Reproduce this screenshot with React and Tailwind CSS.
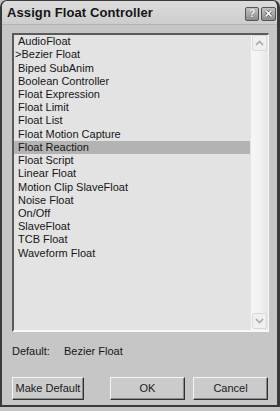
import React from "react";

const items = [
  "AudioFloat",
  "Bezier Float",
  "Biped SubAnim",
  "Boolean Controller",
  "Float Expression",
  "Float Limit",
  "Float List",
  "Float Motion Capture",
  "Float Reaction",
  "Float Script",
  "Linear Float",
  "Motion Clip SlaveFloat",
  "Noise Float",
  "On/Off",
  "SlaveFloat",
  "TCB Float",
  "Waveform Float",
];

function Btn({ children, className }) {
  return (
    <div
      className={
        "h-[23px] flex items-center justify-center whitespace-nowrap bg-[#cbcbcb] border border-t-[#f4f4f4] border-l-[#f4f4f4] border-r-[#303030] border-b-[#303030] shadow-[inset_-1px_-1px_0_#8a8a8a] text-[11px] text-[#1a1a1a] " +
        className
      }
    >
      {children}
    </div>
  );
}

function Chevron({ up }) {
  return (
    <svg width="9" height="6" viewBox="0 0 9 6">
      <path
        d={up ? "M1 5 L4.5 1.5 L8 5" : "M1 1 L4.5 4.5 L8 1"}
        fill="none"
        stroke="#a8a8a8"
        strokeWidth="1.6"
      />
    </svg>
  );
}

export default function App() {
  return (
    <div
      className="w-[280px] h-[411px] bg-[#c4c4c4] overflow-hidden"
      style={{ fontFamily: '"Liberation Sans", Arial, sans-serif' }}
    >
      <div className="w-[280px] h-[407px] flex flex-col bg-[#c6c6c6] border-t border-l-2 border-r-[3px] border-b-2 border-[#3a3a3a] rounded-t-[7px] overflow-hidden">
        {/* title bar */}
        <div className="h-[24px] shrink-0 flex items-center pl-[5px] pr-[1px] bg-gradient-to-b from-[#dcdcdc] to-[#cdcdcd] border-b border-[#b4b4b4]">
          <div className="text-[13px] font-bold text-[#151515] tracking-[0.1px] mt-[1px]">
            Assign Float Controller
          </div>
          <div className="ml-auto flex gap-[2px] mt-[2px]">
            <div className="w-[14px] h-[14px] rounded-[2px] border border-[#555] bg-gradient-to-b from-[#c4c4c4] to-[#8c8c8c] flex items-center justify-center text-white text-[11px] font-bold leading-none [text-shadow:0_0_1px_#333]">
              ?
            </div>
            <div className="w-[15px] h-[14px] rounded-[2px] border border-[#555] bg-gradient-to-b from-[#c4c4c4] to-[#8c8c8c] flex items-center justify-center">
              <svg width="9" height="9" viewBox="0 0 9 9">
                <path d="M1.5 1.5 L7.5 7.5 M7.5 1.5 L1.5 7.5" stroke="#555" strokeWidth="3" />
                <path d="M1.5 1.5 L7.5 7.5 M7.5 1.5 L1.5 7.5" stroke="#fff" strokeWidth="1.7" />
              </svg>
            </div>
          </div>
        </div>

        {/* body */}
        <div className="flex flex-col pl-[10px] pr-[8px] pt-[8px]">
          {/* listbox */}
          <div className="w-[257px] h-[299px] flex bg-[#e3e3e3] border-l-2 border-t-2 border-r border-b-2 border-l-[#5a5a5a] border-t-[#5a5a5a] border-r-[#f8f8f8] border-b-[#f8f8f8]">
            <div className="flex-1 flex flex-col pr-[1px]">
              {items.map((it, i) => (
                <div
                  key={it}
                  className={
                    "h-[13.23px] flex items-center text-[11px] leading-none text-[#161616] whitespace-nowrap " +
                    (i === 1 ? "pl-[1px] " : "pl-[4px] ") +
                    (i === 8 ? "bg-[#b3b3b3]" : "")
                  }
                >
                  <span>{i === 1 ? ">" + it : it}</span>
                </div>
              ))}
            </div>
            <div className="w-[17px] h-full flex flex-col bg-gradient-to-r from-[#f6f6f6] via-[#f2f2f2] to-[#e6e6e6]">
              <div className="h-[16px] mx-[1px] flex items-center justify-center bg-[#efefef] border border-[#dadada] rounded-[2px]">
                <Chevron up />
              </div>
              <div className="flex-1" />
              <div className="h-[16px] mx-[1px] mb-[1px] flex items-center justify-center bg-[#efefef] border border-[#dadada] rounded-[2px]">
                <Chevron />
              </div>
            </div>
          </div>

          {/* default row */}
          <div className="mt-[13px] h-[13px] flex items-center text-[11px] text-[#161616]">
            <span className="w-[52px]">Default:</span>
            <span>Bezier Float</span>
          </div>

          {/* buttons */}
          <div className="mt-[19px] flex">
            <Btn className="w-[72px]">Make Default</Btn>
            <Btn className="w-[75px] ml-[26px]">OK</Btn>
            <Btn className="w-[75px] ml-[8px]">Cancel</Btn>
          </div>
        </div>
      </div>
    </div>
  );
}
